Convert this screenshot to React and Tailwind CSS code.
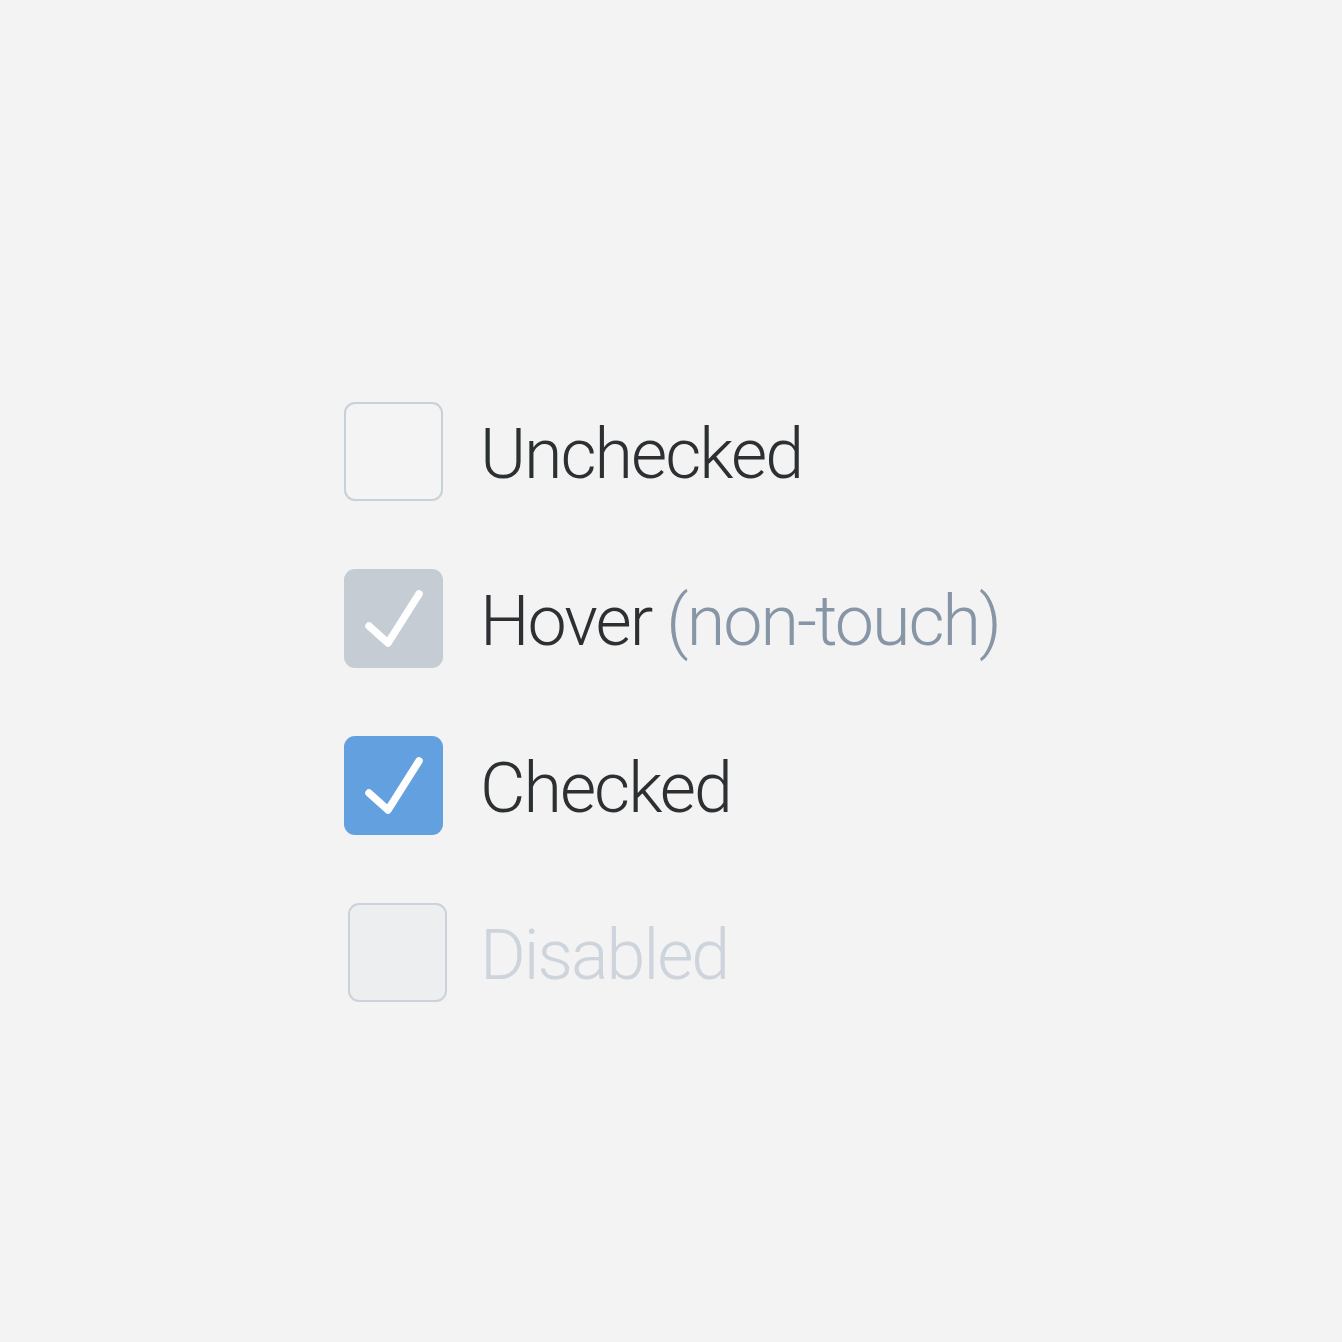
function Check() {
  return (
    <svg viewBox="0 0 99 99" className="h-full w-full" fill="none">
      <path d="M25 57 L44 74 L75 25" stroke="white" strokeWidth="7.5" strokeLinecap="round" strokeLinejoin="round" />
    </svg>
  );
}

const rows = [
  { key: "unchecked", box: "border-2 border-[#c8d0d8] bg-[#f4f4f4]", label: <span className="text-[#2d3033]">Unchecked</span> },
  { key: "hover", box: "bg-[#c5ccd3]", check: true, label: <><span className="text-[#2d3033]">Hover</span> <span className="text-[#8796a6]">(non-touch)</span></> },
  { key: "checked", box: "bg-[#62a0e0]", check: true, label: <span className="text-[#2d3033]">Checked</span> },
  { key: "disabled", box: "ml-1 border-2 border-[#cbd2d9] bg-[#eceef0]", label: <span className="text-[#cdd4dc]">Disabled</span> },
];

export default function App() {
  return (
    <div className="min-h-screen bg-[#f3f3f3] pl-[344px] pt-[402px]" style={{ fontFamily: "Roboto, 'Liberation Sans', sans-serif" }}>
      <div className="flex flex-col gap-[68px]">
        {rows.map((r) => (
          <div key={r.key} className="flex h-[99px] items-center">
            <div className={`h-[99px] w-[99px] shrink-0 rounded-[11px] ${r.box}`}>{r.check && <Check />}</div>
            <div className={`${r.key === "disabled" ? "ml-[33px]" : "ml-[37px]"} mt-[4px] text-[70px] font-light leading-none tracking-[-2px]`}>{r.label}</div>
          </div>
        ))}
      </div>
    </div>
  );
}
